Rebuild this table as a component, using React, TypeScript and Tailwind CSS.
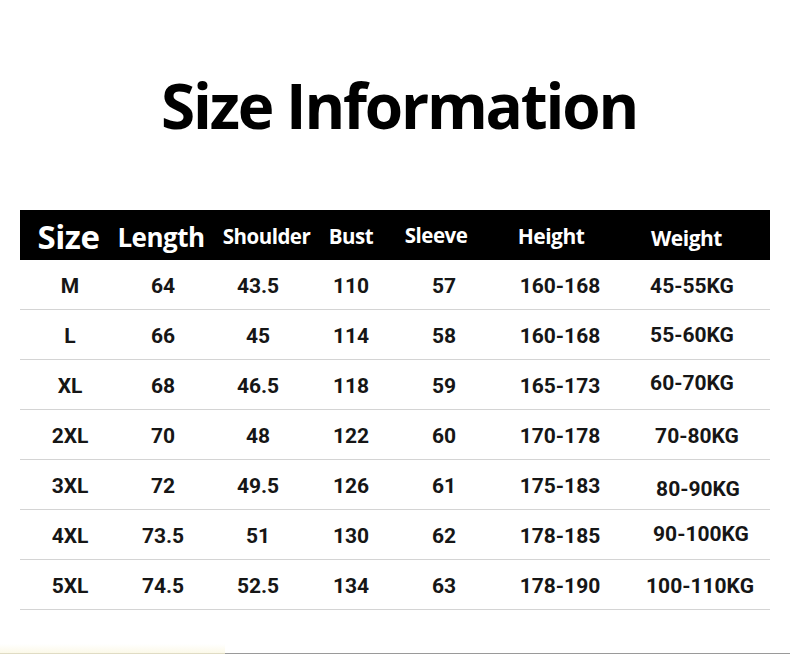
import React from "react";

const cols = [100, 86, 104, 82, 104, 128, 136];

const headers: { t: string; cls: string }[] = [
  { t: "Size", cls: "text-[33px] pr-[3px] pt-[2px]" },
  { t: "Length", cls: "text-[26px] pr-[4px] pt-[3px]" },
  { t: "Shoulder", cls: "text-[20.5px] pl-[17px] pt-[3px]" },
  { t: "Bust", cls: "text-[20.5px] pt-[3px]" },
  { t: "Sleeve", cls: "text-[20.5px] pr-[16px]" },
  { t: "Height", cls: "text-[21px] pr-[18px] pt-[2px]" },
  { t: "Weight", cls: "text-[21px] pr-[11px] pt-[6px]" },
];

const rows: { d: string[]; w: string }[] = [
  { d: ["M", "64", "43.5", "110", "57", "160-168", "45-55KG"], w: "" },
  { d: ["L", "66", "45", "114", "58", "160-168", "55-60KG"], w: "pb-[2px]" },
  { d: ["XL", "68", "46.5", "118", "59", "165-173", "60-70KG"], w: "pb-[5px]" },
  { d: ["2XL", "70", "48", "122", "60", "170-178", "70-80KG"], w: "pl-[10px]" },
  { d: ["3XL", "72", "49.5", "126", "61", "175-183", "80-90KG"], w: "pl-[12px] pt-[6px]" },
  { d: ["4XL", "73.5", "51", "130", "62", "178-185", "90-100KG"], w: "pl-[18px] pb-[4px]" },
  { d: ["5XL", "74.5", "52.5", "134", "63", "178-190", "100-110KG"], w: "pl-[16px]" },
];

export default function App() {
  return (
    <div className="w-[790px] h-[654px] bg-white flex flex-col relative overflow-hidden">
      <h1
        className="mt-[74px] text-center text-[62px] leading-none font-bold text-black tracking-[-2.2px] pl-[8px]"
        style={{ fontFamily: '"Open Sans", sans-serif' }}
      >
        Size Information
      </h1>
      <div className="mt-[74px] mx-[20px] w-[750px] flex flex-col">
        <div
          className="h-[50px] bg-black text-white flex font-bold"
          style={{ fontFamily: '"Open Sans", sans-serif' }}
        >
          {headers.map((h, i) => (
            <div
              key={i}
              style={{ width: cols[i] }}
              className={`flex items-center justify-center leading-none tracking-[-0.5px] ${h.cls}`}
            >
              {h.t}
            </div>
          ))}
        </div>
        {rows.map((r, ri) => (
          <div
            key={ri}
            className="h-[50px] flex border-b border-[#d4d4d4] text-[#161616] font-bold text-[21px] leading-none pt-[3px]"
            style={{ fontFamily: 'Roboto, "Liberation Sans", sans-serif' }}
          >
            {r.d.map((c, ci) => (
              <div
                key={ci}
                style={{ width: cols[ci] }}
                className={`flex items-center justify-center ${ci === 6 ? r.w : ""}`}
              >
                {c}
              </div>
            ))}
          </div>
        ))}
      </div>
      <div className="absolute left-0 bottom-0 w-[225px] h-[10px] bg-gradient-to-b from-white to-[#fbf8e6]" />
      <div className="absolute left-0 bottom-0 w-full h-[1px] flex">
        <div className="w-[225px] bg-[#e0dcc4]" />
        <div className="flex-1 bg-[#9a9a9a]" />
      </div>
    </div>
  );
}
